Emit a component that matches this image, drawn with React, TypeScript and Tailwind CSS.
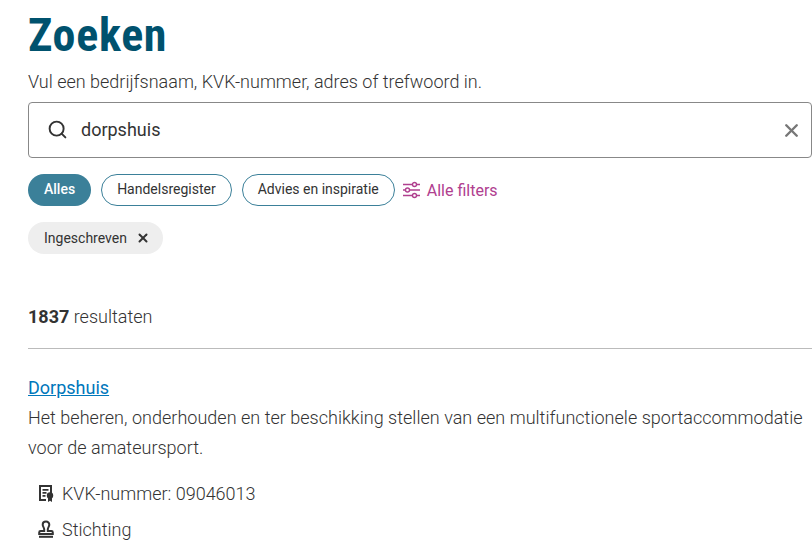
import { Search, X } from "lucide-react"

function FilterIcon() {
  return (
    <svg width="17" height="18" viewBox="0 0 17 18" fill="none" stroke="currentColor" strokeWidth="1.4">
      <path d="M0 3.5h9.500M13.500 3.500h3.500M0 9h2.500M6.500 9h10.500M0 14.500h9.500M13.500 14.500h3.500" />
      <circle cx="11.500" cy="3.500" r="2" />
      <circle cx="4.500" cy="9" r="2" />
      <circle cx="11.500" cy="14.500" r="2" />
    </svg>
  )
}

function CertificateIcon() {
  return (
    <svg width="16" height="18" viewBox="0 0 16 18" className="text-[#333]">
      <path d="M1 1h13v9h-2V3H3v12h5v2H1z" fill="currentColor" />
      <path d="M4.500 5h6v1.800h-6zM4.500 8h4v1.800h-4zM4.500 11h3v1.800h-3z" fill="currentColor" />
      <circle cx="12" cy="11.500" r="3.200" fill="currentColor" />
      <path d="M10 13.500h4V18l-2-1.300-2 1.300z" fill="currentColor" />
    </svg>
  )
}

function StampIcon() {
  return (
    <svg width="16" height="18" viewBox="0 0 16 18" fill="none" stroke="#333" strokeWidth="2">
      <path d="M8 1.500c-2 0-3.300 1.400-3.300 3.200 0 2 1.500 2.800 1.500 4.600V11H2.600c-.8 0-1.400.6-1.400 1.400V14h13.600v-1.600c0-.8-.6-1.400-1.400-1.400H9.800V9.300c0-1.800 1.500-2.600 1.500-4.600 0-1.800-1.300-3.200-3.300-3.200z" />
      <path d="M1 16.800h14" />
    </svg>
  )
}

export default function App() {
  return (
    <div className="w-[812px] h-[548px] overflow-hidden bg-white pl-7 font-['Roboto',sans-serif] text-[#333]">
      <h1 className="mt-[11px] h-[48px] text-[46px] leading-[48px] font-bold tracking-[0.7px] text-[#00526e] [font-stretch:81%]">Zoeken</h1>

      <p className="mt-[11px] h-[24px] text-[18px] leading-[24px] font-light">
        Vul een bedrijfsnaam, KVK-nummer, adres of trefwoord in.
      </p>

      <div className="mt-[8px] flex h-[56px] w-[784px] items-center rounded-[4px] border border-[#888] pb-[2px] pl-[18px] pr-[9px]">
        <Search size={21} strokeWidth={2.2} className="text-[#333]" />
        <span className="ml-[13px] flex-1 text-[18px]">dorpshuis</span>
        <X size={21} strokeWidth={2.8} className="translate-y-px text-[#777]" />
      </div>

      <div className="mt-[16px] flex items-center">
        <span className="flex h-[32px] items-center rounded-full bg-[#3b8099] px-4 pb-[2px] text-[14px] font-medium text-white">Alles</span>
        <span className="ml-[10px] flex h-[32px] items-center rounded-full border border-[#3b8099] px-[15px] pb-[2px] text-[14px]">Handelsregister</span>
        <span className="ml-[10px] flex h-[32px] items-center rounded-full border border-[#3b8099] px-[15px] pb-[2px] text-[14px]">Advies en inspiratie</span>
        <span className="ml-[8px] flex items-center text-[16px] text-[#b0408f]">
          <FilterIcon />
          <span className="ml-[7px] translate-y-px">Alle filters</span>
        </span>
      </div>

      <div className="mt-[16px] flex">
        <span className="flex h-[32px] items-center rounded-full bg-[#eeeeee] pl-4 pr-[13px] text-[14px]">
          Ingeschreven
          <X size={14} strokeWidth={3.4} className="ml-[9px]" />
        </span>
      </div>

      <p className="mt-[51px] h-[24px] text-[18px] leading-[24px] font-light">
        <span className="font-bold">1837</span> resultaten
      </p>

      <div className="mt-[19px] w-[784px] border-t border-[#bbb]" />

      <a className="mt-[27px] block w-fit text-[18px] leading-[24px] text-[#0077bb] underline">Dorpshuis</a>

      <p className="mt-[3px] w-[784px] text-[18px] leading-[30px] font-light tracking-[0.02px]">
        Het beheren, onderhouden en ter beschikking stellen van een multifunctionele sportaccommodatie voor de amateursport.
      </p>

      <div className="mt-[18px] flex h-[24px] items-center pl-[10px] text-[18px] font-light">
        <CertificateIcon />
        <span className="ml-[8px]">KVK-nummer: 09046013</span>
      </div>
      <div className="mt-[12px] flex h-[24px] items-center pl-[10px] text-[18px] font-light">
        <StampIcon />
        <span className="ml-[8px]">Stichting</span>
      </div>
    </div>
  )
}
